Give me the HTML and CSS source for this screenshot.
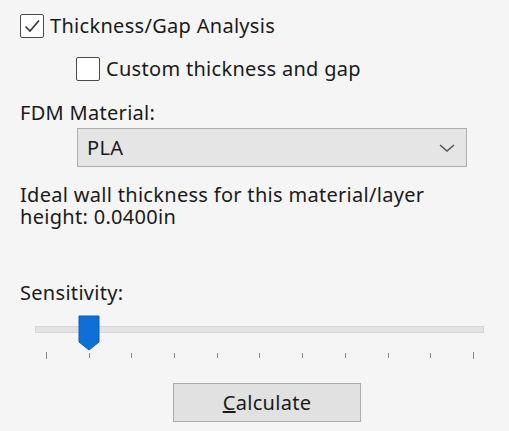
FILE: index.html
```html
<!DOCTYPE html>
<html lang="en">
<head>
  <meta charset="UTF-8">
  <title>Thickness Analysis</title>
  <link rel="stylesheet" href="styles.css">
</head>
<body>
  <div class="panel">
    <!-- Analysis toggles -->
    <label class="check">
      <span class="box">
        <svg width="20" height="20" viewBox="0 0 20 20"><path d="M3.5 10.5 L8 15 L17 4.5" fill="none" stroke="#333" stroke-width="1.6"/></svg>
      </span>
      Thickness/Gap Analysis
    </label>
    <label class="check sub">
      <span class="box"></span>
      Custom thickness and gap
    </label>

    <div class="field-label">FDM Material:</div>
    <div class="select">
      <span>PLA</span>
      <svg width="18" height="10" viewBox="0 0 18 10"><path d="M2 2 L9 8 L16 2" fill="none" stroke="#555" stroke-width="1.6"/></svg>
    </div>

    <p class="info">Ideal wall thickness for this material/layer height: 0.0400in</p>

    <div class="field-label sens">Sensitivity:</div>
    <div class="slider">
      <div class="track"></div>
      <svg class="thumb" width="22" height="36" viewBox="0 0 22 36"><path d="M1 1 H21 V27 L11 35 L1 27 Z" fill="#0e6fd6" stroke="#0b5fbd" stroke-width="1"/></svg>
      <div class="ticks">
        <i class="long"></i><i></i><i></i><i></i><i></i><i></i><i></i><i></i><i></i><i></i><i class="long"></i>
      </div>
    </div>

    <button class="calc"><u>C</u>alculate</button>
  </div>
</body>
</html>
```

FILE: styles.css
```css
body {
  margin: 0;
  background-color: #f5f5f5;
  font-family: "Noto Sans", "Open Sans", sans-serif;
  font-size: 20px;
  letter-spacing: 0.3px;
  line-height: 24px;
  color: #1a1a1a;
}
.panel {
  padding: 13px 0 0 20px;
  width: 470px;
}
.check {
  display: flex;
  align-items: center;
  gap: 6px;
  height: 25px;
}
.check.sub {
  margin: 18px 0 0 56px;
}
.box {
  width: 22px;
  height: 22px;
  border: 1.5px solid #4a4a4a;
  border-radius: 2px;
  background: #fff;
  display: flex;
  align-items: center;
  justify-content: center;
}
.field-label {
  margin-top: 20px;
}
.select {
  margin: 3px 0 0 57px;
  width: 390px;
  height: 39px;
  border: 1px solid #adadad;
  background: #e5e5e5;
  display: flex;
  align-items: center;
  justify-content: space-between;
  padding: 0 10px 0 9px;
  box-sizing: border-box;
}
.info {
  margin: 17px 0 0;
  line-height: 22px;
  width: 440px;
}
.sens {
  margin-top: 53px;
}
.slider {
  position: relative;
  margin: 10px 0 0 15px;
  padding-top: 11px;
  width: 449px;
}
.track {
  height: 5px;
  background: #e3e3e3;
  border: 1px solid #d6d6d6;
}
.thumb {
  position: absolute;
  left: 43px;
  top: 0;
}
.ticks {
  display: flex;
  justify-content: space-between;
  align-items: flex-start;
  height: 7px;
  margin: 19px 10px 0 11px;
}
.ticks i {
  width: 1px;
  height: 5px;
  margin-top: 1px;
  background: #8a8a8a;
}
.ticks i.long {
  height: 7px;
  margin-top: 0;
}
.calc {
  display: block;
  margin: 24px 0 0 153px;
  width: 188px;
  height: 39px;
  background-color: #e1e1e1;
  border: 1px solid #adadad;
  font-family: inherit;
  font-size: 20px;
  letter-spacing: 0.3px;
  color: #1a1a1a;
  padding: 0;
}
```
